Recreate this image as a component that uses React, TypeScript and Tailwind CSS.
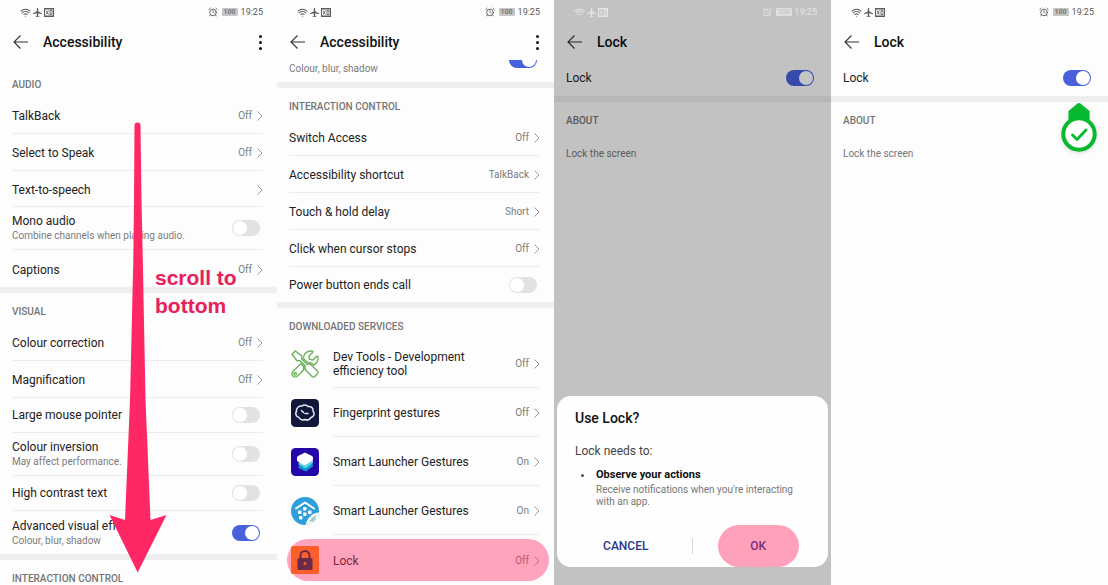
import type { ReactNode } from "react";
import { AlarmClock, Wifi } from "lucide-react";
import { MdAirplanemodeActive } from "react-icons/md";
import { FaTools } from "react-icons/fa";

function StatusBar({ light = false }: { light?: boolean }) {
  return (
    <div
      className={`relative z-10 flex h-6 shrink-0 items-center justify-between pl-5 pr-3.5 ${
        light ? "text-[#e6e6e6]" : "text-[#5c5c5c]"
      }`}
    >
      <div className="flex items-center gap-px">
        <Wifi className="size-[11px]" strokeWidth={2.2} />
        <MdAirplanemodeActive className="size-[11px]" />
        <svg viewBox="0 0 20 18" className="h-[9px] w-2.5" fill="none" stroke="currentColor">
          <path d="M0 1.500h20M0 16.500h20" strokeWidth="3" />
          <path d="M1 1v16M19 1v16" strokeWidth="2" />
          <path d="M4 5l5 8M9 5l-5 8M12 5h4v8h-4z" strokeWidth="1.800" />
        </svg>
      </div>
      <div className="flex items-center gap-[3px]">
        <AlarmClock className="size-2.5" strokeWidth={2.2} />
        <span
          className={`ml-px flex h-2 w-4 items-center justify-center rounded-[1px] text-[7px] font-bold leading-none ${
            light ? "bg-[#dedede] text-[#c8c8c8]" : "bg-[#c6c6c6] text-[#777]"
          }`}
        >
          100
        </span>
        <span className="text-[9px] leading-3">19:25</span>
      </div>
    </div>
  );
}

function Header({ title, menu = false }: { title: string; menu?: boolean }) {
  return (
    <header className="flex h-9 shrink-0 items-center pl-3 pr-3.5">
      <button type="button" aria-label="Back" className="mr-3.5 text-[#333]">
        <svg viewBox="0 0 34 32" className="h-4 w-[17px]" fill="none" stroke="currentColor" strokeWidth="2.2">
          <path d="M17 3L4 16l13 13M4 16h28" />
        </svg>
      </button>
      <h1 className="grow text-[14px] font-medium leading-5 text-[#111]">{title}</h1>
      {menu && (
        <button type="button" aria-label="More options" className="flex w-1.5 flex-col items-center gap-[3px]">
          <span className="size-[3px] rounded-full bg-[#111]" />
          <span className="size-[3px] rounded-full bg-[#111]" />
          <span className="size-[3px] rounded-full bg-[#111]" />
        </button>
      )}
    </header>
  );
}

function Toggle({ id, on = false }: { id: string; on?: boolean }) {
  return (
    <input
      id={id}
      type="checkbox"
      role="switch"
      defaultChecked={on}
      className="mr-[3px] flex h-4 w-7 shrink-0 appearance-none items-center rounded-full bg-[#e2e2e2] p-px before:size-3.5 before:rounded-full before:bg-white checked:justify-end checked:bg-[#4860dc]"
    />
  );
}

function Chevron() {
  return (
    <svg viewBox="0 0 12 20" className="h-2.5 w-1.5 shrink-0 text-[#999]" fill="none" stroke="currentColor" strokeWidth="2">
      <path d="M1 1l9 9-9 9" />
    </svg>
  );
}

function Value({ text }: { text?: string }) {
  return (
    <span className="flex items-center gap-[5px] text-[10px] leading-4 text-[#7c7c7c]">
      {text}
      <Chevron />
    </span>
  );
}

const label = "text-[12px] leading-4 text-[#222]";
const note = "text-[10px] leading-3.5 text-[#7c7c7c]";

function Section({ title, children }: { title: string; children?: ReactNode }) {
  return (
    <section className="shrink-0">
      <h2 className="h-[31px] pl-3 pt-[11px] text-[10px] font-medium leading-4 text-[#757575]">{title}</h2>
      <div className="pl-3 pr-3.5 [&>*]:border-b [&>*]:border-[#ececec] [&>*:last-child]:border-b-0">{children}</div>
    </section>
  );
}

function Band() {
  return <div className="h-1.5 shrink-0 bg-[#efefef]" />;
}

function LinkRow({ name, value }: { name: string; value?: string }) {
  return (
    <a href="#" className={`flex items-center justify-between pt-0.5 ${value ? "h-[37px]" : "h-9"}`}>
      <span className={label}>{name}</span>
      <Value text={value} />
    </a>
  );
}

function ToggleRow({ id, name, detail, on }: { id: string; name: string; detail?: string; on?: boolean }) {
  return (
    <div className={`flex items-center justify-between ${detail ? "h-[43px]" : "h-[35px]"}`}>
      <label htmlFor={id} className="flex flex-col whitespace-nowrap">
        <span className={label}>{name}</span>
        {detail && <span className={note}>{detail}</span>}
      </label>
      <Toggle id={id} on={on} />
    </div>
  );
}

function ServiceRow({ icon, name, value, last = false }: { icon: ReactNode; name: string; value: string; last?: boolean }) {
  return (
    <a href="#" className="flex h-[49px] shrink-0 gap-3.5 pl-3.5 pr-3.5">
      <span className="flex w-7 shrink-0 items-center">{icon}</span>
      <span className={`flex grow items-center justify-between pt-0.5 ${last ? "" : "border-b border-[#ececec]"}`}>
        <span className="max-w-[150px] text-[12px] leading-3.5 text-[#222]">{name}</span>
        <Value text={value} />
      </span>
    </a>
  );
}

function ToolsIcon() {
  return <FaTools className="m-px size-[26px] overflow-visible fill-white stroke-[#6db45f] [stroke-width:28]" />;
}

function FingerprintIcon() {
  return (
    <svg viewBox="0 0 56 56" className="size-7">
      <rect width="56" height="56" rx="9" fill="#11173a" />
      <path
        d="M22 14c3-3 9-3 12 1 6-1 11 3 10 9 4 5 2 12-4 13-3 5-8 6-12 4-5 2-10 0-12-4-6-1-8-8-5-13-1-6 5-11 11-10z"
        fill="none"
        stroke="#e6e9f4"
        strokeWidth="3"
      />
      <path d="M21 23l4 4M28 29h6" stroke="#e6e9f4" strokeWidth="3" strokeLinecap="round" />
    </svg>
  );
}

function LayersIcon() {
  return (
    <svg viewBox="0 0 56 56" className="size-7">
      <rect width="56" height="56" rx="9" fill="#2405a8" />
      <path d="M15 36l13-8 16 5v4L31 46q-2 1-4 0L15 40z" fill="#1590c4" />
      <path d="M15 29l13-8 16 5v4L31 40q-2 1-4 0L15 33z" fill="#4fd3e6" />
      <path d="M12 19q0-2 2-3l12-6q2-1 4 0l12 6q2 1 2 3v4q0 2-2 3L29 34q-2 1-4 0L14 27q-2-1-2-3z" fill="#fff" />
    </svg>
  );
}

function LauncherIcon() {
  return (
    <svg viewBox="0 0 56 56" className="size-7">
      <circle cx="28" cy="28" r="28" fill="#2f9fd9" />
      <path d="M10 23L28 11l18 12" fill="none" stroke="#fff" strokeWidth="4" strokeLinecap="round" strokeLinejoin="round" />
      <g fill="#fff">
        <rect x="24" y="20" width="7" height="7" rx="2" />
        <rect x="14" y="27" width="7" height="7" rx="2" />
        <rect x="34" y="27" width="7" height="7" rx="2" />
        <rect x="24" y="31" width="7" height="7" rx="2" />
        <rect x="16" y="38" width="7" height="7" rx="2" />
      </g>
      <path d="M56 31C43 32 33 40 29 56c15 0 27-11 27-25z" fill="#f4f8fa" />
      <path d="M38 49l11-11M43 49l6-6" stroke="#7cc7b0" strokeWidth="2.5" />
    </svg>
  );
}

function LockIcon() {
  return (
    <svg viewBox="0 0 56 56" className="size-7">
      <rect width="56" height="56" rx="3" fill="#fa8502" />
      <rect x="13" y="24" width="30" height="24" rx="3" fill="#002b38" />
      <path d="M19 26v-7a9 9 0 0118 0v7" fill="none" stroke="#002b38" strokeWidth="4" />
      <circle cx="28" cy="35" r="3" fill="#fa8502" />
    </svg>
  );
}

function ScrollArrow() {
  return (
    <div className="pointer-events-none absolute inset-x-0 top-0">
      <svg viewBox="0 0 277 585" className="h-[585px] w-[277px]">
        <path
          d="M137.500 122.500q3 0 3 3L141.500 200L142.800 260L145.500 400L150.500 520L166.500 515L137.700 572.500L109.500 515L125 520L130 400L133.300 260L134 200L134.500 125.500q0-3 3-3z"
          fill="#ff2864"
        />
      </svg>
      <p className="absolute left-[155px] top-[264px] w-24 font-['Liberation_Sans',Arial,sans-serif] text-[21px] font-bold leading-7 text-[#e91e5c] [text-shadow:0_1px_2px_#fff,0_0_2px_#ddd]">
        scroll to bottom
      </p>
    </div>
  );
}

function CheckPin() {
  return (
    <svg viewBox="0 0 40 56" className="pointer-events-none absolute right-[9px] top-[101px] h-14 w-10 drop-shadow-sm">
      <path d="M20 2q1 0 2 1l8.500 7v10h-21V10L18 3q1-1 2-1z" fill="#06b92f" />
      <circle cx="20" cy="33" r="15.700" fill="#fff" stroke="#06b92f" strokeWidth="4" />
      <path d="M13.500 34l4.500 4.500L27 29" fill="none" stroke="#06b92f" strokeWidth="2.800" strokeLinecap="round" strokeLinejoin="round" />
    </svg>
  );
}

function Phone({ children }: { children: ReactNode }) {
  return <div className="relative flex min-w-0 flex-col overflow-hidden bg-[#fdfdfd]">{children}</div>;
}

function LockSettings({ id }: { id: string }) {
  return (
    <>
      <Header title="Lock" />
      <div className="flex h-9 shrink-0 items-center justify-between pl-3 pr-3.5">
        <label htmlFor={id} className={label}>
          Lock
        </label>
        <Toggle id={id} on />
      </div>
      <Band />
      <Section title="ABOUT">
        <p className="pt-3.5 text-[10px] leading-3.5 text-[#777]">Lock the screen</p>
      </Section>
    </>
  );
}

export default function App() {
  return (
    <main className="grid h-screen grid-cols-4 overflow-hidden font-[Roboto,'Noto_Sans',sans-serif]">
      <Phone>
        <StatusBar />
        <Header title="Accessibility" menu />
        <div className="h-1.5 shrink-0" />
        <Section title="AUDIO">
          <LinkRow name="TalkBack" value="Off" />
          <LinkRow name="Select to Speak" value="Off" />
          <LinkRow name="Text-to-speech" />
          <ToggleRow id="mono" name="Mono audio" detail="Combine channels when playing audio." />
          <LinkRow name="Captions" value="Off" />
        </Section>
        <Band />
        <Section title="VISUAL">
          <LinkRow name="Colour correction" value="Off" />
          <LinkRow name="Magnification" value="Off" />
          <ToggleRow id="pointer" name="Large mouse pointer" />
          <ToggleRow id="inversion" name="Colour inversion" detail="May affect performance." />
          <ToggleRow id="contrast" name="High contrast text" />
          <ToggleRow id="effects" name="Advanced visual effects" detail="Colour, blur, shadow" on />
        </Section>
        <Band />
        <Section title="INTERACTION CONTROL" />
        <ScrollArrow />
      </Phone>

      <Phone>
        <StatusBar />
        <Header title="Accessibility" menu />
        <div className="flex h-[22px] shrink-0 items-end justify-between overflow-hidden pl-3 pr-3.5">
          <label htmlFor="effects-scrolled" className={`${note} pb-1.5`}>
            Colour, blur, shadow
          </label>
          <div className="flex pb-3.5">
            <Toggle id="effects-scrolled" on />
          </div>
        </div>
        <Band />
        <Section title="INTERACTION CONTROL">
          <LinkRow name="Switch Access" value="Off" />
          <LinkRow name="Accessibility shortcut" value="TalkBack" />
          <LinkRow name="Touch &amp; hold delay" value="Short" />
          <LinkRow name="Click when cursor stops" value="Off" />
          <ToggleRow id="power" name="Power button ends call" />
        </Section>
        <Band />
        <Section title="DOWNLOADED SERVICES" />
        <ServiceRow icon={<ToolsIcon />} name="Dev Tools - Development efficiency tool" value="Off" />
        <ServiceRow icon={<FingerprintIcon />} name="Fingerprint gestures" value="Off" />
        <ServiceRow icon={<LayersIcon />} name="Smart Launcher Gestures" value="On" />
        <ServiceRow icon={<LauncherIcon />} name="Smart Launcher Gestures" value="On" />
        <div className="relative shrink-0">
          <ServiceRow icon={<LockIcon />} name="Lock" value="Off" last />
          <div className="pointer-events-none absolute left-2.5 right-[5px] top-1 h-[42px] rounded-full bg-[#ff2864]/42" />
        </div>
      </Phone>

      <Phone>
        <StatusBar light />
        <LockSettings id="lock-pending" />
        <div className="absolute inset-0 bg-black/23" />
        <div
          role="dialog"
          aria-labelledby="use-lock"
          className="absolute inset-x-[3px] bottom-[18px] overflow-hidden rounded-[14px] bg-[#fefefe]"
        >
          <div className="px-[18px] pt-3">
            <h2 id="use-lock" className="text-[14px] font-medium leading-5 text-[#111]">
              Use Lock?
            </h2>
            <p className="mt-3.5 text-[12px] leading-[18px] text-[#444]">Lock needs to:</p>
            <div className="mt-1.5 flex">
              <span className="flex h-[18px] w-[21px] shrink-0 items-center pl-1.5">
                <span className="size-[3px] rounded-full bg-[#555]" />
              </span>
              <div>
                <p className="text-[11px] font-bold leading-[18px] text-[#111]">Observe your actions</p>
                <p className="text-[10px] leading-3 text-[#777]">Receive notifications when you're interacting with an app.</p>
              </div>
            </div>
          </div>
          <div className="mt-[17px] flex items-center pl-[3px] pr-1 text-[12px] font-medium leading-4">
            <div className="flex flex-1 justify-center">
              <button type="button" className="text-[#28348f]">
                CANCEL
              </button>
            </div>
            <span className="h-4 w-px bg-[#d6d6d6]" />
            <div className="flex flex-1 justify-center">
              <button type="button" className="h-[42px] w-[81px] rounded-full bg-[#ffa1bb] text-[#7f2b7d]">
                OK
              </button>
            </div>
          </div>
        </div>
      </Phone>

      <Phone>
        <StatusBar />
        <LockSettings id="lock-enabled" />
        <CheckPin />
      </Phone>
    </main>
  );
}
